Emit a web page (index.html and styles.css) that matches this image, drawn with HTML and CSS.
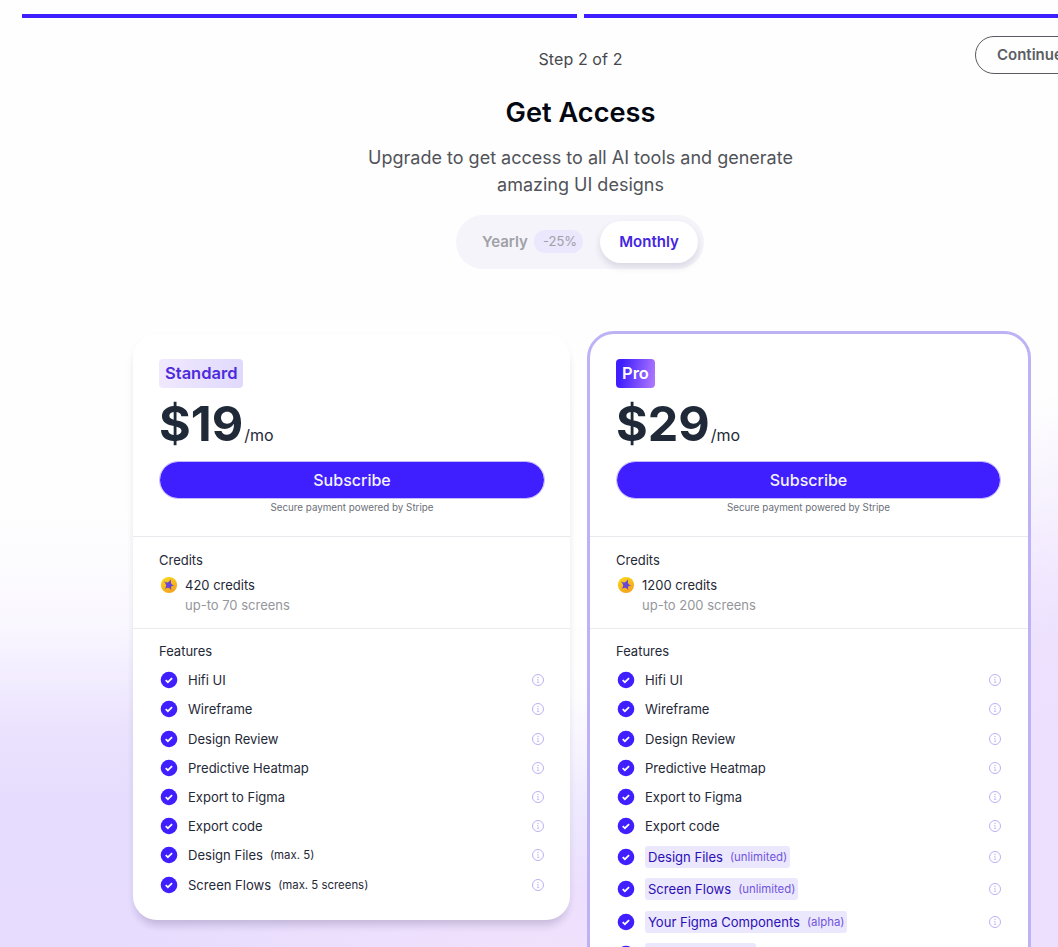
FILE: index.html
```html
<!DOCTYPE html>
<html lang="en">
<head>
<meta charset="utf-8">
<title>Get Access</title>
<link rel="stylesheet" href="styles.css">
</head>
<body>
<svg class="defs" aria-hidden="true">
  <defs>
    <linearGradient id="gold" x1="0" y1="0" x2="0.5" y2="1"><stop offset="0" stop-color="#fadb16"/><stop offset="1" stop-color="#f5a51f"/></linearGradient>
    <symbol id="check" viewBox="0 0 18 18"><circle cx="9" cy="9" r="8.3" fill="#3f1fff"/><path d="M5.7 9.1l2.2 2.1 4.2-4.1" fill="none" stroke="#fff" stroke-width="1.7"/></symbol>
    <symbol id="info" viewBox="0 0 14 14"><circle cx="7" cy="7" r="5.5" fill="none" stroke="#bdb0f6"/><path d="M6 6.5h1.1v3M5.9 9.5h2.3" fill="none" stroke="#c5baf7" stroke-width=".8"/><circle cx="7" cy="4.5" r=".65" fill="#bdb0f6"/></symbol>
    <symbol id="coin" viewBox="0 0 18 18"><circle cx="9" cy="9" r="8.1" fill="url(#gold)"/><path d="M3.9 5.2Q6.8 7 8.2 6.2Q10 5 11 3.3Q10.7 6.2 11.2 7.4Q12.2 9.1 14.3 9.8Q11.8 9.9 11 10.7Q10.8 12 11.5 14.1Q9.6 12.1 8.4 11.7Q6.9 11.7 4.6 12.8Q6.3 10.8 6.3 9.2Q5.8 7.4 3.9 5.2Z" fill="#6846d8"/></symbol>
  </defs>
</svg>
<div class="page">
  <div class="progress"><span></span><span></span></div>
  <header class="top">
    <p class="step">Step 2 of 2</p>
    <button class="continue">Continue</button>
    <h1>Get Access</h1>
    <p class="lead">Upgrade to get access to all AI tools and generate amazing UI designs</p>
    <div class="toggle">
      <div class="yearly">Yearly <span>-25%</span></div>
      <div class="monthly">Monthly</div>
    </div>
  </header>
  <main class="plans">
    <section class="card standard">
      <div class="offer">
        <h2 class="badge">Standard</h2>
        <div class="price"><b>$19</b><span>/mo</span></div>
        <button class="subscribe">Subscribe</button>
        <p class="secure">Secure payment powered by Stripe</p>
      </div>
      <div class="credits">
        <h3>Credits</h3>
        <div class="amount"><svg class="coin"><use href="#coin"/></svg>420 credits</div>
        <p class="screens">up-to 70 screens</p>
      </div>
      <div class="features">
        <h3>Features</h3>
        <ul>
          <li><svg class="check"><use href="#check"/></svg><div class="name">Hifi UI</div><svg class="info"><use href="#info"/></svg></li>
          <li><svg class="check"><use href="#check"/></svg><div class="name">Wireframe</div><svg class="info"><use href="#info"/></svg></li>
          <li><svg class="check"><use href="#check"/></svg><div class="name">Design Review</div><svg class="info"><use href="#info"/></svg></li>
          <li><svg class="check"><use href="#check"/></svg><div class="name">Predictive Heatmap</div><svg class="info"><use href="#info"/></svg></li>
          <li><svg class="check"><use href="#check"/></svg><div class="name">Export to Figma</div><svg class="info"><use href="#info"/></svg></li>
          <li><svg class="check"><use href="#check"/></svg><div class="name">Export code</div><svg class="info"><use href="#info"/></svg></li>
          <li><svg class="check"><use href="#check"/></svg><div class="name">Design Files <small>(max. 5)</small></div><svg class="info"><use href="#info"/></svg></li>
          <li><svg class="check"><use href="#check"/></svg><div class="name">Screen Flows <small>(max. 5 screens)</small></div><svg class="info"><use href="#info"/></svg></li>
        </ul>
      </div>
    </section>
    <section class="card pro">
      <div class="offer">
        <h2 class="badge">Pro</h2>
        <div class="price"><b>$29</b><span>/mo</span></div>
        <button class="subscribe">Subscribe</button>
        <p class="secure">Secure payment powered by Stripe</p>
      </div>
      <div class="credits">
        <h3>Credits</h3>
        <div class="amount"><svg class="coin"><use href="#coin"/></svg>1200 credits</div>
        <p class="screens">up-to 200 screens</p>
      </div>
      <div class="features">
        <h3>Features</h3>
        <ul>
          <li><svg class="check"><use href="#check"/></svg><div class="name">Hifi UI</div><svg class="info"><use href="#info"/></svg></li>
          <li><svg class="check"><use href="#check"/></svg><div class="name">Wireframe</div><svg class="info"><use href="#info"/></svg></li>
          <li><svg class="check"><use href="#check"/></svg><div class="name">Design Review</div><svg class="info"><use href="#info"/></svg></li>
          <li><svg class="check"><use href="#check"/></svg><div class="name">Predictive Heatmap</div><svg class="info"><use href="#info"/></svg></li>
          <li><svg class="check"><use href="#check"/></svg><div class="name">Export to Figma</div><svg class="info"><use href="#info"/></svg></li>
          <li><svg class="check"><use href="#check"/></svg><div class="name">Export code</div><svg class="info"><use href="#info"/></svg></li>
          <li class="extra"><svg class="check"><use href="#check"/></svg><div class="name">Design Files <small>(unlimited)</small></div><svg class="info"><use href="#info"/></svg></li>
          <li class="extra"><svg class="check"><use href="#check"/></svg><div class="name">Screen Flows <small>(unlimited)</small></div><svg class="info"><use href="#info"/></svg></li>
          <li class="extra"><svg class="check"><use href="#check"/></svg><div class="name">Your Figma Components <small>(alpha)</small></div><svg class="info"><use href="#info"/></svg></li>
          <li class="extra"><svg class="check"><use href="#check"/></svg><div class="name blank"></div></li>
        </ul>
      </div>
    </section>
  </main>
</div>
</body>
</html>
```
FILE: styles.css
```css
* { box-sizing: border-box; }
html { height: 947px; overflow: hidden; }
body, h1, h2, h3, p, ul { margin: 0; padding: 0; font-weight: 400; }
button { font-family: inherit; }
body {
  height: 947px;
  overflow: hidden;
  font-family: Inter, sans-serif;
  color: #1f2937;
  background:
    radial-gradient(ellipse 340px 440px at 1100px 830px, #ecdffe 0, #ede1fe 45%, rgba(240,232,255,0) 100%),
    radial-gradient(ellipse 430px 330px at 530px 560px, #fff 0, rgba(255,255,255,.9) 40%, rgba(255,255,255,0) 100%),
    radial-gradient(ellipse 420px 160px at 540px 960px, #f1e2fd 0, rgba(241,226,253,0) 100%),
    linear-gradient(to bottom, #fefefe 0, #fefefe 510px, #faf8ff 620px, #ebe2fe 730px, #e6ddfe 800px, #e7dcfe 947px);
}
.defs { position: absolute; width: 0; height: 0; }
.page { width: 1139px; height: 947px; overflow: hidden; padding: 14px 0 0 22px; }
.progress { display: grid; grid-template-columns: 1fr 1fr; gap: 7px; }
.progress span { height: 4px; background: #3f1fff; }
.top { position: relative; display: flex; flex-direction: column; align-items: center; text-align: center; }
.step { margin-top: 29px; font-size: 16px; line-height: 24px; letter-spacing: .1px; color: #46484d; }
.continue {
  position: absolute; left: 953px; top: 18px;
  width: 164px; height: 38px; padding: 0 21px 2px;
  border: 1px solid #595b61; border-radius: 19px; background: transparent;
  font-size: 15px; font-weight: 600; color: #5c5e65; text-align: left;
}
h1 { margin-top: 24px; font-size: 27.2px; line-height: 36px; font-weight: 600; color: #030712; }
.lead { width: 448px; margin-top: 13px; font-size: 18px; line-height: 27px; color: #515359; }
.toggle {
  display: flex; align-items: center; justify-content: space-between;
  width: 248px; height: 54px; margin: 17px 1px 0 0; padding: 0 6px 0 26px;
  border-radius: 27px; background: #f5f4fa;
  font-size: 15px; font-weight: 600;
}
.yearly { display: flex; align-items: center; gap: 6px; height: 42px; padding-bottom: 1px; color: #a0a1a7; }
.yearly span { padding: 0 6px 0 9px; border-radius: 12px; background: #ebe7fd; font-size: 13px; line-height: 23px; font-weight: 400; }
.monthly {
  width: 98px; height: 42px; border-radius: 21px; background: #fff;
  line-height: 42px; color: #4425e0; box-shadow: 0 4px 7px rgba(30,20,70,.13);
}
.plans { display: flex; align-items: flex-start; gap: 17px; margin: 62px 0 0 111px; }
.card { background: #fff; }
.standard { width: 437px; margin-top: 3px; height: 586px; border-radius: 24px; box-shadow: 0 9px 10px -5px rgba(35,25,70,.16), 0 5px 9px rgba(35,25,70,.06); }
.pro { width: 444px; height: 700px; border: 3px solid #beb2f6; border-radius: 27px; }
.offer { height: 203px; padding: 25px 26px 0; border-bottom: 1px solid #e8e9ed; }
.badge { width: max-content; padding: 0 6px; border-radius: 4px; font-size: 16.5px; line-height: 29px; font-weight: 600; color: #4c2bdc; background: linear-gradient(100deg, #f1e9fe, #e0d9fc); }
.pro .badge { color: #fff; background: linear-gradient(100deg, #3f1fff 15%, #b37aff); }
.price { display: flex; align-items: baseline; height: 60px; margin-top: 6px; color: #1f2937; }
.price b { font-size: 48.5px; line-height: 60px; }
.price span { margin-left: 1px; font-size: 16px; }
.subscribe { display: block; width: 100%; height: 38px; margin-top: 7px; padding: 0 0 1px; border: 1px solid #c6baff; border-radius: 19px; background: #3f1fff; background-clip: padding-box; color: #f5f3ff; font-size: 16px; font-weight: 500; }
.secure { margin-top: 2px; text-align: center; font-size: 9.8px; line-height: 14px; color: #6b6f78; }
.credits { height: 92px; padding: 14px 26px 0; border-bottom: 1px solid #eaebee; }
h3 { font-size: 13px; line-height: 18px; }
.amount { display: flex; align-items: center; gap: 8px; margin-top: 6px; font-size: 13px; line-height: 20px; }
.coin, .check { position: relative; left: .5px; width: 18px; height: 18px; flex: none; }
.screens { padding-left: 26px; font-size: 13px; line-height: 20px; color: #95969b; }
.features { padding: 13px 26px 0; }
.features ul { margin-top: 5.6px; list-style: none; }
.features li { display: flex; align-items: center; height: 29.2px; font-size: 13.05px; }
.check { margin-right: 11px; }
.name { display: flex; align-items: center; gap: 7px; height: 22px; border-radius: 3px; white-space: nowrap; }
.name small { font-size: 11.4px; }
.info { width: 14px; height: 14px; margin-left: auto; flex: none; }
.features .extra { height: 32.5px; }
.extra .name { padding: 0 3px; background: #ebe7fd; color: #2c10b5; }
.extra .blank { width: 111px; }
.extra small { color: #7154dd; }
.standard .offer, .standard .features { padding-right: 25px; }
.pro .offer, .pro .credits { padding-right: 27px; }
.pro .features { padding-right: 26px; }
```
